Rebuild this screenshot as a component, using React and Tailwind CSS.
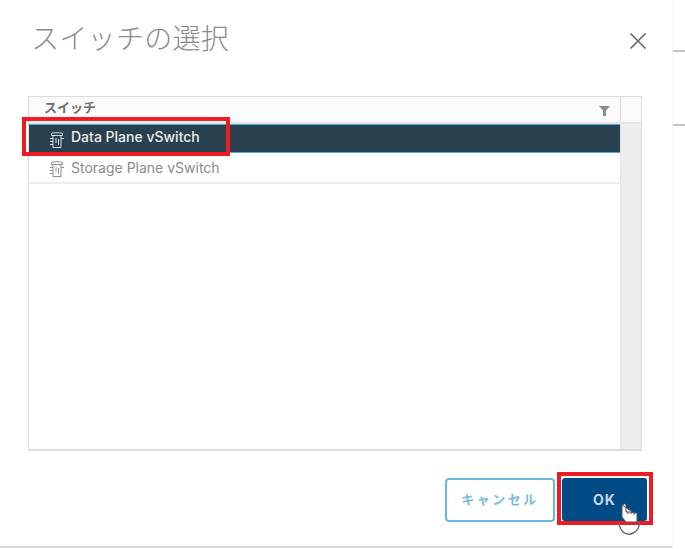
const SwitchIcon = ({ className }) => (
  <svg width="16" height="18" viewBox="0 0 16 18" fill="none" stroke="currentColor" strokeWidth="1" className={className}>
    <path d="M2.5 2.5 C2.5 1.5 13.5 1.5 13.5 2.5 V4.5 H2.5 Z" />
    <path d="M4 4.5 V16.5 H12 V4.5" />
    <path d="M1 7.5 h3 M1 10.5 h3 M1 13.5 h3 M12 7.5 h3" />
    <path d="M7 7 v5 M9.5 8 v6" />
  </svg>
);

const rows = [
  { name: "Data Plane vSwitch", selected: true },
  { name: "Storage Plane vSwitch", selected: false },
];

export default function App() {
  return (
    <div className="relative h-[549px] w-[685px] overflow-hidden bg-white font-['Inter','Noto_Sans_CJK_JP',sans-serif]">
      <div className="flex h-[549px]">
        {/* ===== DIALOG ===== */}
        <div className="flex h-[548px] w-[673px] flex-col border-r border-b-2 border-r-[#f4f4f4] border-b-[#d8d8d8] pl-7 pr-[30px]">
          <div className="flex h-[96px] items-start justify-between">
            <h2 className="mt-[20px] ml-[3px] text-[28px] leading-[38px] font-extralight tracking-[0.3px] text-[#8a8a8a]">
              スイッチの選択
            </h2>
            <svg width="18" height="18" viewBox="0 0 18 18" className="mt-[32px] mr-[-5px] text-[#666]" stroke="currentColor" strokeWidth="1.6">
              <path d="M1.5 1.5 L16.5 16.5 M16.5 1.5 L1.5 16.5" />
            </svg>
          </div>

          {/* ===== TABLE ===== */}
          <div className="flex h-[355px] w-[614px] flex-col border border-[#dcdcdc] border-b-2">
            <div className="flex h-[27px] border-b-2 border-[#e6e6e6] bg-[#fafafa]">
              <div className="flex flex-1 items-center justify-between border-r border-[#dcdcdc] pl-[15px] pr-[10px]">
                <span className="mt-[-3px] text-[13px] font-bold text-[#6f6f6f]">スイッチ</span>
                <svg width="11" height="10" viewBox="0 0 11 10" className="mt-[3px]">
                  <path d="M0 0 H11 L7 4.5 V10 H4 V4.5 Z" fill="#8d8d8d" />
                </svg>
              </div>
              <div className="w-[20px]" />
            </div>
            <div className="flex flex-1">
              <div className="flex-1 border-r border-[#e4e4e4]">
                {rows.map((r) => (
                  <div
                    key={r.name}
                    className={
                      r.selected
                        ? "flex h-[29px] items-center gap-[6px] border-y border-[#49afd9] bg-[#29414e] pl-[20px] text-[14px] font-medium text-[#e9edf0]"
                        : "flex h-[31px] items-center gap-[6px] border-b-2 border-[#eeeeee] pl-[20px] text-[14px] text-[#8a8a8a]"
                    }
                  >
                    <SwitchIcon className={r.selected ? "mt-[2px] text-[#d5dbdf]" : "mt-[3px] text-[#8f8f8f]"} />
                    <span className={r.selected ? "mt-[-4px]" : "mt-[-1px]"}>{r.name}</span>
                  </div>
                ))}
              </div>
              <div className="w-[20px] bg-[#eeeeee]" />
            </div>
          </div>

          {/* ===== FOOTER ===== */}
          <div className="mt-[27px] flex justify-end gap-[7px]">
            <button className="h-[44px] w-[110px] rounded-[4px] border-2 border-[#6fb6dc] bg-white text-[13px] font-bold tracking-[2.5px] text-[#7bbbde]">
              キャンセル
            </button>
            <button className="mr-[-5px] h-[43px] w-[85px] rounded-[3px] bg-[#004a86] text-[14px] font-bold tracking-[1px] text-[#c6d6e4]">
              OK
            </button>
          </div>
        </div>

        {/* ===== PAGE BEHIND ===== */}
        <div className="flex flex-1 flex-col pt-[50px]">
          <div className="h-[2px] bg-[#c4c4c4]" />
          <div className="mt-[72px] h-[2px] bg-[#c4c4c4]" />
        </div>
      </div>

      {/* annotation boxes and cursor */}
      <div className="absolute left-[22px] top-[117px] h-[39px] w-[208px] border-[4px] border-[#ed1c24]" />
      <div className="absolute left-[557px] top-[472px] h-[53px] w-[96px] border-[4px] border-[#ed1c24]" />
      <svg width="30" height="36" viewBox="0 0 30 36" className="absolute left-[616px] top-[503px]">
        <path d="M3 20 C4 30 12 33 17 30 C22 28 24 23 23 19" fill="none" stroke="#6b6b6b" strokeWidth="1.5" />
        <path d="M7 2 C7 0.5 10 0.5 10 2 V9 H12 V11 M12 9 H15 V11 M15 9.5 H18 V12 M18 10 H21 V19 H10 L6 14 V2 Z" fill="#ffffff" stroke="#555555" strokeWidth="1" />
      </svg>
    </div>
  );
}
